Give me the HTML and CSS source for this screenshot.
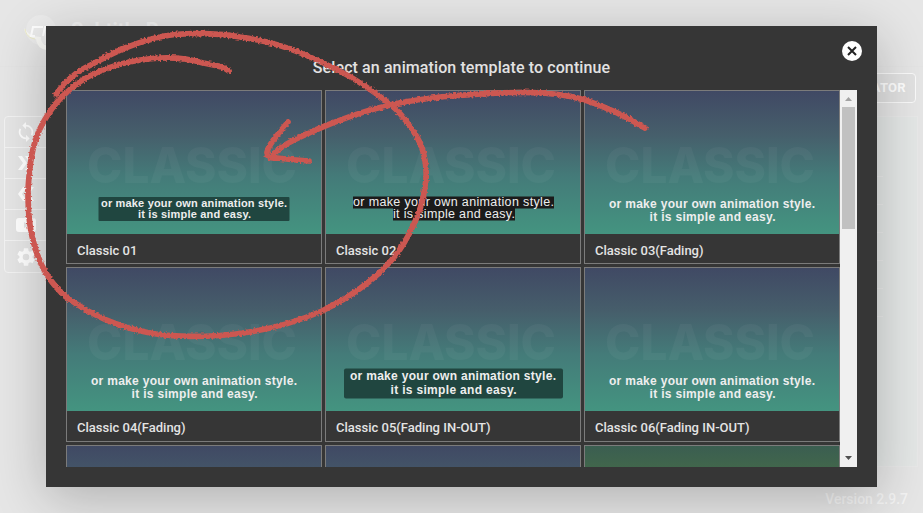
FILE: index.html
```
<!DOCTYPE html>
<html lang="en">
<head>
<meta charset="utf-8">
<title>Select an animation template</title>
<link rel="stylesheet" href="styles.css">
</head>
<body>
<div class="page">
  <header class="brand">
    <svg class="logo" width="40" height="38" viewBox="0 0 40 38"><circle cx="17" cy="16" r="15" fill="#ececec"/><path d="M0 14c1 7 5 10 12 11 1 7 5 11 12 11v-4c-5-1-7-4-7-9C9 23 4 20 0 14Z" fill="#f8f8f5"/><path d="M1 15c1 6 4 9 10 10" fill="none" stroke="#ecebc8"/><path d="M19 13H9L7 22h4M24 13h-3l-2 9" fill="none" stroke="#fff" stroke-width="2"/></svg>
    <span class="brand-name">Subtitle Pro</span>
  </header>
  <div class="topbar"><span class="tab">TRANSLATOR</span></div>
  <main class="work">
    <nav class="tools">
      <span class="tool"><svg width="22" height="22" viewBox="0 0 24 24"><path d="M12 4V1L8 5l4 4V6a6 6 0 0 1 5.300 8.800l1.400 1.400A8 8 0 0 0 12 4Zm0 14a6 6 0 0 1-5.300-8.800L5.300 7.800A8 8 0 0 0 12 20v3l4-4-4-4Z"/></svg></span>
      <span class="tool"><svg width="20" height="20" viewBox="0 0 20 20"><path d="M2 3h4l5 7-5 7H2l5-7Zm7 0h4l5 7-5 7H9l5-7Z"/></svg></span>
      <span class="tool"><svg width="20" height="20" viewBox="0 0 20 20"><path d="M18 3h-4l-5 7 5 7h4l-5-7Zm-7 0H7l-5 7 5 7h4l-5-7Z"/></svg></span>
      <span class="tool"><svg width="20" height="20" viewBox="0 0 20 20"><path fill-rule="evenodd" d="M3 3h14q3 0 3 3v8q0 3-3 3H3q-3 0-3-3V6q0-3 3-3Zm5 4v6l5-3Z"/></svg></span>
      <span class="tool"><svg width="22" height="22" viewBox="0 0 24 24"><path d="M19.140 12.940a7 7 0 0 0 0-1.880l2.030-1.580a.5.5 0 0 0 .12-.61l-1.920-3.320a.5.5 0 0 0-.59-.22l-2.390.96a7 7 0 0 0-1.620-.94l-.36-2.540a.5.5 0 0 0-.48-.41h-3.840a.5.5 0 0 0-.47.41l-.36 2.540a7 7 0 0 0-1.620.94l-2.390-.96a.5.5 0 0 0-.59.22L2.740 8.870a.5.5 0 0 0 .12.61l2.030 1.580a7 7 0 0 0 0 1.880l-2.030 1.580a.5.5 0 0 0-.12.61l1.920 3.320c.12.22.37.29.59.22l2.390-.96c.5.38 1.030.7 1.620.94l.36 2.540c.05.24.24.41.48.41h3.840c.24 0 .44-.17.47-.41l.36-2.540a7 7 0 0 0 1.620-.94l2.390.96c.22.08.47 0 .59-.22l1.920-3.320a.5.5 0 0 0-.12-.61ZM12 15.600a3.600 3.600 0 1 1 0-7.200 3.600 3.600 0 0 1 0 7.200Z" fill-rule="evenodd"/></svg></span>
    </nav>
    <section class="rows"><i></i><i></i><i></i><i></i><i></i><i></i></section>
  </main>
  <footer class="version">Version 2.9.7</footer>
</div>

<div class="dialog">
  <h1 class="title">Select an animation template to continue</h1>
  <button class="close" aria-label="Close"><svg width="20" height="20" viewBox="0 0 20 20"><circle cx="10" cy="10" r="10" fill="#fff"/><path d="M6 6l8 8M14 6l-8 8" stroke="#222" stroke-width="2"/></svg></button>
  <div class="viewport">
    <div class="grid">
      <article class="card">
        <svg class="thumb" viewBox="0 0 254 143"><text class="ghost" x="20" y="92" textLength="210" lengthAdjust="spacingAndGlyphs">CLASSIC</text><rect class="plate" x="31.500" y="106" width="191" height="24" rx="1"/><text class="cap small" x="34" y="115.500" textLength="186">or make your own animation style.</text><text class="cap small" x="71" y="126.500" textLength="113">it is simple and easy.</text></svg>
        <h2 class="name">Classic 01</h2>
      </article>
      <article class="card">
        <svg class="thumb" viewBox="0 0 254 143"><text class="ghost" x="20" y="92" textLength="210" lengthAdjust="spacingAndGlyphs">CLASSIC</text><path class="box" d="M27 105.500h201v12h-39v12H67v-12H27Z"/><text class="cap thin" x="27" y="115" textLength="201">or make your own animation style.</text><text class="cap thin" x="67" y="127" textLength="122">it is simple and easy.</text></svg>
        <h2 class="name">Classic 02</h2>
      </article>
      <article class="card">
        <svg class="thumb" viewBox="0 0 254 143"><text class="ghost" x="20" y="92" textLength="210" lengthAdjust="spacingAndGlyphs">CLASSIC</text><text class="cap" x="24" y="116.500" textLength="206">or make your own animation style.</text><text class="cap" x="64.500" y="129.500" textLength="126">it is simple and easy.</text></svg>
        <h2 class="name">Classic 03(Fading)</h2>
      </article>
      <article class="card">
        <svg class="thumb" viewBox="0 0 254 143"><text class="ghost" x="20" y="92" textLength="210" lengthAdjust="spacingAndGlyphs">CLASSIC</text><text class="cap" x="24" y="116.500" textLength="206">or make your own animation style.</text><text class="cap" x="64.500" y="129.500" textLength="126">it is simple and easy.</text></svg>
        <h2 class="name">Classic 04(Fading)</h2>
      </article>
      <article class="card">
        <svg class="thumb" viewBox="0 0 254 143"><text class="ghost" x="20" y="92" textLength="210" lengthAdjust="spacingAndGlyphs">CLASSIC</text><rect class="plate" x="18" y="100.500" width="219" height="30" rx="2"/><text class="cap" x="24" y="112" textLength="206">or make your own animation style.</text><text class="cap" x="64.500" y="125.500" textLength="126">it is simple and easy.</text></svg>
        <h2 class="name">Classic 05(Fading IN-OUT)</h2>
      </article>
      <article class="card">
        <svg class="thumb" viewBox="0 0 254 143"><text class="ghost" x="20" y="92" textLength="210" lengthAdjust="spacingAndGlyphs">CLASSIC</text><text class="cap" x="24" y="116.500" textLength="206">or make your own animation style.</text><text class="cap" x="64.500" y="129.500" textLength="126">it is simple and easy.</text></svg>
        <h2 class="name">Classic 06(Fading IN-OUT)</h2>
      </article>
      <article class="card"><div class="thumb"></div></article>
      <article class="card"><div class="thumb"></div></article>
      <article class="card"><div class="thumb green"></div></article>
    </div>
    <div class="scrollbar">
      <svg width="17" height="17" viewBox="0 0 17 17"><path d="M5 11h7L8.500 7Z" fill="#a3a3a3"/></svg>
      <div class="handle"></div>
      <svg class="down" width="17" height="17" viewBox="0 0 17 17"><path d="M5 6h7l-3.500 4Z" fill="#505050"/></svg>
    </div>
  </div>
</div>

<svg class="marker" width="923" height="513" viewBox="0 0 923 513">
  <filter id="rough" x="0" y="0" width="923" height="513" filterUnits="userSpaceOnUse" color-interpolation-filters="sRGB"><feTurbulence type="fractalNoise" baseFrequency="0.5" numOctaves="2" seed="4"/><feDisplacementMap in="SourceGraphic" scale="3.5" xChannelSelector="R" yChannelSelector="G"/></filter>
  <g filter="url(#rough)">
    <path d="M56 94C65 83 72 75 83 69C97 62 110 54 125 48C140 42 157 36 175 34.500C190 33 218 33 240 37C262 40 282 45 303 54C325 63 346 73 365 86C375 93 383 98 391 105C400 112 405 119 411 128C418 137 421 144 423.500 153C426 163 427 177 425 187C423 202 419 214 413 226C406 241 398 254 388 264C370 284 346 299 322 311C290 325 255 333 220 335.500C195 337 172 337 150 333C118 327 93 316 66 297C52 285 39 266 33 240C29 226 28 207 28 190C29 174 30 157 35 142C39 127 52 105 67 92C84 76 110 65 140 60C166 56 187 58 203 63C214 65 223 66 229 71"/>
    <path d="M645 128C624 115 603 106 585 100C565 94 538 92 515 92.500C490 93 462 95 440 97C425 99 406 101 391 105C370 109 345 118 325 126C306 134 280 145 273 155"/>
    <path d="M288 122C279 133 266 147 267 154Q268 159 277 158Q294 160 309 161"/>
  </g>
</svg>
</body>
</html>
```
FILE: styles.css
```
* { box-sizing: border-box; }

body {
  margin: 0;
  width: 923px;
  height: 513px;
  overflow: hidden;
  position: relative;
  background: #e6e6e6;
  font-family: Roboto, "Liberation Sans", sans-serif;
}

.page {
  height: 513px;
  display: flex;
  flex-direction: column;
}

.brand {
  height: 66px;
  padding: 14px 0 0 24px;
  display: flex;
  gap: 7px;
}

.brand-name {
  padding-top: 4px;
  font-size: 20px;
  font-weight: 700;
  color: #f2f2f2;
}

.topbar {
  height: 50px;
  padding: 6px 7px 0 0;
  display: flex;
  justify-content: flex-end;
  align-items: flex-start;
  border-top: 1px solid #e4e4e4;
}

.tab {
  height: 30px;
  padding: 0 9px;
  border: 1px solid #fafafa;
  border-radius: 4px;
  background: #e2e2e2;
  color: #fff;
  font-size: 13px;
  font-weight: 700;
  letter-spacing: 0.3px;
  line-height: 28px;
}

.work {
  flex: 1;
  padding: 0 5px 0 4px;
  display: flex;
  justify-content: space-between;
  align-items: flex-start;
}

.tools {
  width: 46px;
  border: 1px solid #f3f3f3;
  border-radius: 4px;
}

.tool {
  height: 31px;
  padding-right: 2px;
  display: flex;
  align-items: center;
  justify-content: center;
  border-bottom: 1px solid #f3f3f3;
}

.tool:last-child { border-bottom: 0; }
.tool svg { fill: #fff; }

.rows {
  width: 120px;
  height: 351px;
  padding-top: 32px;
  border: 1px solid #e9e9e9;
  background: #e4e7e6;
}

.rows i {
  display: block;
  width: 84px;
  height: 28px;
  border-bottom: 1px solid #ebebeb;
}

.version {
  height: 25px;
  padding: 3px 15px 0 0;
  text-align: right;
  font-size: 14px;
  font-weight: 500;
  color: #f4f4f4;
}

/* Dialog over the page */
.dialog {
  position: absolute;
  left: 46px;
  top: 26px;
  width: 831px;
  height: 461px;
  padding: 32px 20px 20px;
  background: #363636;
  box-shadow: 0 11px 50px rgba(0, 0, 0, 0.24);
}

.title {
  margin: 0;
  height: 32px;
  text-align: center;
  font-size: 16px;
  font-weight: 500;
  letter-spacing: 0.1px;
  line-height: 19px;
  color: #e2e2e2;
}

.close {
  position: absolute;
  right: 15px;
  top: 15px;
  padding: 0;
  border: 0;
  background: none;
}

.close svg { display: block; }

.viewport {
  height: 377px;
  display: flex;
  overflow: hidden;
}

.grid {
  flex: 1;
  display: grid;
  grid-template-columns: repeat(3, 256px);
  grid-template-rows: 174px 175px 174px;
  gap: 3px;
}

.card {
  border: 1px solid #7b7b7b;
  overflow: hidden;
}

.thumb {
  display: block;
  width: 254px;
  height: 143px;
  background: linear-gradient(#404964, #465e6b 30%, #447b79 60%, #449480);
}

.green { background: linear-gradient(#3b5e51, #43694a 20%, #4d8050); }

.name {
  margin: 0;
  padding: 9px 10px 0;
  font-size: 13px;
  font-weight: 500;
  line-height: 15px;
  color: #e4e4e4;
}

.ghost {
  font: 800 50px Inter, sans-serif;
  fill: #fff;
  fill-opacity: 0.04;
}

.cap {
  font: 700 12px "Liberation Sans", sans-serif;
  fill: #eee;
}

.small { font-size: 11px; }
.thin { font-size: 12.5px; font-weight: 400; }
.plate { fill: #204640; }
.box { fill: #1b1b1b; }

.scrollbar {
  width: 17px;
  display: flex;
  flex-direction: column;
  background: #f0f0f0;
}

.handle {
  height: 122px;
  margin: 0 2px;
  background: #c1c1c1;
}

.down { margin-top: auto; }

/* Hand-drawn annotation above everything */
.marker {
  position: absolute;
  left: 0;
  top: 0;
  pointer-events: none;
}

.marker path {
  fill: none;
  stroke: #cc5751;
  stroke-width: 5.7;
  stroke-linecap: round;
  stroke-linejoin: round;
}
```
